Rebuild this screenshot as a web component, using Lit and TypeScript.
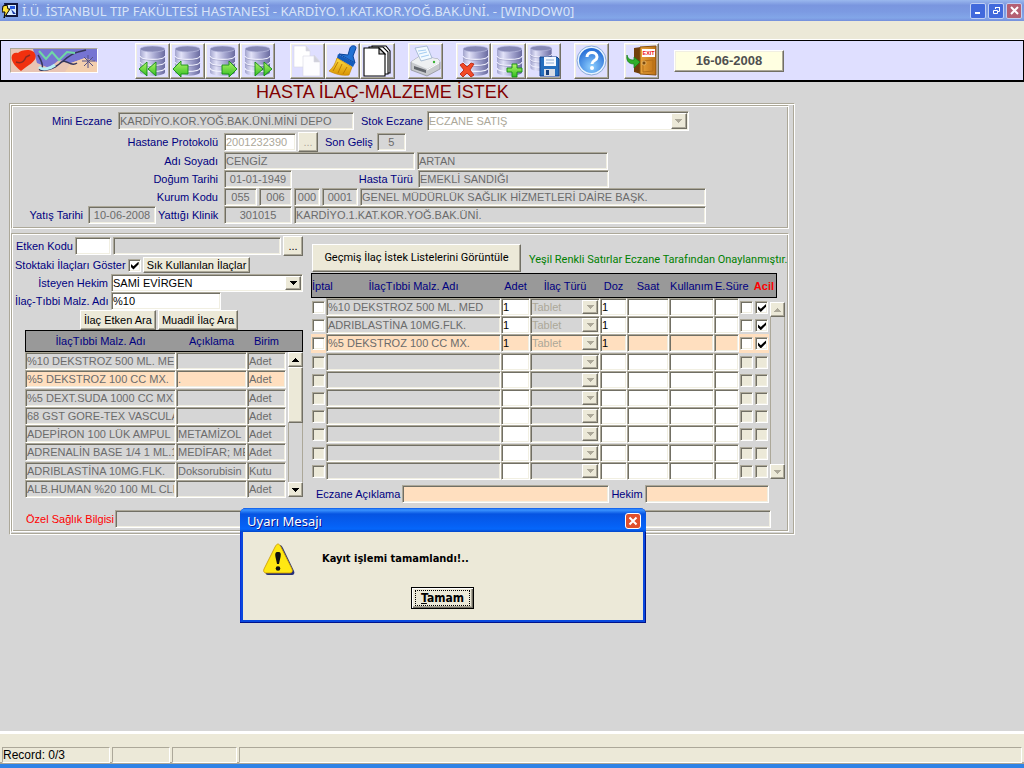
import { LitElement, html, css, svg, nothing } from "lit";
import { customElement, state } from "lit/decorators.js";
import { classMap } from "lit/directives/class-map.js";

interface Drug { name: string; note: string; unit: string; }
interface Order { name: string; qty: string; kind: string; dose: string; urgent: boolean; }

const DRUGS: Drug[] = [
  { name: "%10 DEKSTROZ 500 ML. MED", note: "", unit: "Adet" },
  { name: "%5 DEKSTROZ 100 CC MX.", note: ".", unit: "Adet" },
  { name: "%5 DEXT.SUDA 1000 CC MX.", note: "", unit: "Adet" },
  { name: "68 GST GORE-TEX VASCULAR", note: "", unit: "Adet" },
  { name: "ADEPİRON 100 LÜK AMPUL", note: "METAMİZOL", unit: "Adet" },
  { name: "ADRENALİN BASE 1/4 1 ML.10", note: "MEDİFAR; MED", unit: "Adet" },
  { name: "ADRIBLASTİNA 10MG.FLK.", note: "Doksorubisin HCl", unit: "Kutu" },
  { name: "ALB.HUMAN %20 100 ML CLB", note: "", unit: "Adet" },
];

const ORDERS: (Order | null)[] = [
  { name: "%10 DEKSTROZ 500 ML. MED", qty: "1", kind: "Tablet", dose: "1", urgent: true },
  { name: "ADRIBLASTİNA 10MG.FLK.", qty: "1", kind: "Tablet", dose: "1", urgent: true },
  { name: "%5 DEKSTROZ 100 CC MX.", qty: "1", kind: "Tablet", dose: "1", urgent: true },
  null, null, null, null, null, null, null,
];

const arrow = (up = false) => html`<svg viewBox="0 0 7 4" width="7" height="4" aria-hidden="true">
  <path d=${up ? "M3 0h1v1h1v1h1v1h1v1h-7v-1h1v-1h1v-1h1z" : "M0 0h7v1h-1v1h-1v1h-1v1h-1v-1h-1v-1h-1v-1h-1z"} fill="currentColor"/></svg>`;

const db = (x = 0, y = 0, s = 1) => svg`<g transform="translate(${x} ${y}) scale(${s})">
  <path d="M4 5v23c0 5 25 5 25 0v-23z" fill="url(#cyl)"/>
  <ellipse cx="16.500" cy="5" rx="12.500" ry="3" fill="#8688b5" stroke="#b9bbdf" stroke-width=".7"/>
  <path d="M4 12c0 4.500 25 4.500 25 0M4 18c0 4.500 25 4.500 25 0M4 24c0 4.500 25 4.500 25 0" fill="none" stroke="#f3f3ff" stroke-width="1.100"/>
  <path d="M4 13c0 4.500 25 4.500 25 0M4 19c0 4.500 25 4.500 25 0" fill="none" stroke="#6c6da0" stroke-width=".6" opacity=".6"/></g>`;

const defs = svg`<defs>
  <linearGradient id="cyl"><stop offset="0" stop-color="#a2a4cd"/><stop offset=".25" stop-color="#e2e2f8"/><stop offset=".6" stop-color="#a5a6d0"/><stop offset="1" stop-color="#6a6ba0"/></linearGradient>
  <linearGradient id="grn" x2="0" y2="1"><stop offset="0" stop-color="#b6f56c"/><stop offset="1" stop-color="#2fbd20"/></linearGradient>
  <linearGradient id="wood"><stop offset="0" stop-color="#e9a33b"/><stop offset="1" stop-color="#bd7015"/></linearGradient>
  <linearGradient id="gold" x2="0" y2="1"><stop offset="0" stop-color="#ffdf43"/><stop offset="1" stop-color="#d99405"/></linearGradient>
  <radialGradient id="orb" cx=".5" cy=".75" r=".7"><stop offset="0" stop-color="#8fd0ff"/><stop offset="1" stop-color="#276ed6"/></radialGradient>
</defs>`;

const G = (d: string) => svg`<path d=${d} fill="url(#grn)" stroke="#128b12" stroke-width=".9" stroke-linejoin="round"/>`;

const ICONS: Record<string, unknown> = {
  first: svg`${db()}${G("M11 18v14l-8-7zM20 18v14l-8-7z")}`,
  prev: svg`${db()}${G("M10 17v4h7v9h-7v3l-8-8z")}`,
  next: svg`${db()}${G("M23 17v4h-7v9h7v3l8-8z")}`,
  last: svg`${db()}${G("M14 18v14l8-7zM23 18v14l8-7z")}`,
  copy: svg`<g stroke="#d8d8e4" stroke-width=".6"><path d="M3 2h12l4 5v16h-16z" fill="#fff"/><path d="M15 2v5h4z" fill="#d4d4de"/>
    <path d="M12 12h12l5 6v14h-17z" fill="#fdfdff"/><path d="M23 11v7h6z" fill="#d0d0da"/></g>`,
  brush: svg`<path d="M22 11l2-7c1-3 6-3 6 0l-3 8 2 7-16-9z" fill="#2372d4" stroke="#0b459b"/><path d="M12 10l17 9-2 4-16-9z" fill="#145bbb"/>
    <path d="M11 14l15 9-3 8c-7 1-14-1-20-4 4-3 6-7 8-13z" fill="url(#gold)" stroke="#c48604" stroke-width=".7"/>
    <path d="M12 18l-5 9M16 20l-4 9M21 23l-4 7" stroke="#bb7c05" fill="none"/>`,
  pages: svg`<g fill="#fff" stroke="#000" stroke-width="1.100"><path d="M11 2h14l4 5v22h-18z"/><path d="M8 3h14l5 5v22h-19z"/><path d="M3 4h15l6 6v22h-21z"/><path d="M18 4v6h6z" fill="#ccc"/></g>`,
  print: svg`<path d="M2 18l9-6 18 3 2 3v7l-13 7-16-6z" fill="#c7c9cd" stroke="#888b91" stroke-width=".7"/><path d="M2 18l9-6 18 3 2 3-13 7z" fill="#eef0f2"/>
    <path d="M6 4l12-2 5 12-11 3z" fill="#f3faff" stroke="#8fa8c4" stroke-width=".7"/><path d="M9 7l8-1M10 10l8-2M12 13l8-2" stroke="#a5cdf2"/>
    <path d="M5 22l12 4v3l-12-4z" fill="#62666c"/><path d="M18 26l12-7" stroke="#fff"/><circle cx="25" cy="18" r="1.200" fill="#39b332"/>`,
  del: svg`${db(2)}<path d="M3 21l3-2 4 4 4-4 3 1-4 6 4 5-3 2-4-4-4 4-3-3 4-4z" fill="#f24a28" stroke="#b51c08" stroke-width=".8"/>`,
  add: svg`${db(1)}${G("M20 20h5v4h5v4h-5v5h-5v-5h-5v-4h5z")}`,
  save: svg`${db(0, 0, 0.85)}<path d="M13 13h17l2 2v17h-19z" fill="#246ebe" stroke="#123f8b"/><path d="M17 13h12v9h-12z" fill="#f4f8ff"/><path d="M19 16h8M19 19h8" stroke="#8faed6"/><path d="M17 25h11v7h-11z" fill="#d7dce6"/><path d="M19 26h3v5h-3z" fill="#143e7d"/>`,
  help: svg`<circle cx="16.500" cy="16.500" r="14.500" fill="#e8f4ff" stroke="#8cabd7"/><circle cx="16.500" cy="16.500" r="12.500" fill="url(#orb)"/>
    <path d="M12 13c0-6 10-6 10 0 0 4-5 3-5 7" fill="none" stroke="#fff" stroke-width="3"/><circle cx="17" cy="24" r="2" fill="#fff"/>`,
  exit: svg`<path d="M9 4l7-1v27l-7-2z" fill="#713f0c"/><path d="M15 3l16-1v29l-16-1z" fill="url(#wood)" stroke="#85500d"/><path d="M18 17l10-1v11l-10 1z" fill="none" stroke="#b36e19"/>
    <path d="M17 5h13v8h-13z" fill="#fff"/><text x="17.500" y="11" font-size="5.500" font-weight="700" fill="#e11" font-family="Liberation Sans, sans-serif">EXIT</text>
    <circle cx="19" cy="19" r="2" fill="#7c4b10" stroke="#f6c878" stroke-width=".7"/><path d="M2 11c1 4 3 5 7 5v-3l6 5-6 6v-4c-6 0-8-4-7-9z" fill="#2fae2a" stroke="#127a16" stroke-width=".7"/>`,
};

const TOOLS: { id: string; label: string }[][] = [
  [{ id: "first", label: "İlk kayıt" }, { id: "prev", label: "Önceki kayıt" }, { id: "next", label: "Sonraki kayıt" }, { id: "last", label: "Son kayıt" }],
  [{ id: "copy", label: "Kopyala" }, { id: "brush", label: "Temizle" }, { id: "pages", label: "Listele" }],
  [{ id: "print", label: "Yazdır" }],
  [{ id: "del", label: "Sil" }, { id: "add", label: "Ekle" }, { id: "save", label: "Kaydet" }],
  [{ id: "help", label: "Yardım" }],
  [{ id: "exit", label: "Çıkış" }],
];

@customElement("app-root")
export class AppRoot extends LitElement {
  @state() private dialogOpen = true;

  static styles = css`
    :host { display: flex; flex-direction: column; position: relative; min-height: 100vh; background: #d6d6d6; color: #000;
      font: 11px/14px "Liberation Sans", Arial, sans-serif; overflow: hidden; }
    *, *::before { box-sizing: border-box; }
    button, input, select { font: inherit; color: inherit; margin: 0; border-radius: 0; min-width: 0; }
    svg { display: block; flex: none; }

    .titlebar { height: 21px; display: flex; align-items: center; gap: 4px; padding: 0 2px;
      background: linear-gradient(#9ab8ee, #7a96df 25%, #7c9ae2 55%, #82a6e8 85%, #7690dc); color: #d8e4f8;
      font: 13px/16px "Noto Sans", sans-serif; }
    .titlebar h1 { font: inherit; margin: 0; flex: 1; white-space: nowrap; overflow: hidden; }
    .winbtn { width: 16px; height: 16px; padding: 0; border: 1px solid #c0cff4; border-radius: 2px; background: #4169dc; color: #fff; display: grid; place-items: center; }
    .winbtn.close { background: #b46073; }
    .wins { display: flex; gap: 2px; }
    .menubar { height: 19px; background: #ece9d8; border-bottom: 1px solid #fff; }
    .toolbar { display: flex; align-items: center; height: 42px; background: #dfdfff; border: 1px solid #000; border-bottom-width: 2px; padding: 0 9px; gap: 13px; }
    .logo { border: 1px solid; border-color: #aca899 #fff #fff #aca899; margin-right: 24px; }
    .tools { display: flex; }
    .tools:nth-of-type(2), .tools:nth-of-type(6) { margin-left: 2px; }
    .tool { width: 35px; height: 36px; padding: 0; background: #dfdfff; }
    .date { width: 110px; height: 22px; margin-left: 2px; text-align: center; background: #ffffe1; color: #4f4f4f; font-weight: 700; font-size: 13px; padding: 0; }
    .raised { border: 1px solid; border-color: #fff #716f64 #716f64 #fff; box-shadow: inset -1px -1px #aca899, inset 1px 1px #f1efe2; }

    main { flex: 1; }
    .heading { margin: 0; padding-left: 256px; color: #800000; font-size: 18px; line-height: 21px; font-weight: 400; white-space: nowrap; }
    .frame, .group { border: 1px solid; border-color: #aca899 #fff #fff #aca899; box-shadow: inset 1px 1px #fff, inset -1px -1px #aca899; padding: 2px; }
    .frame { max-width: 786px; margin-left: 9px; padding: 1px 5px 2px 1px; display: grid; gap: 4px; }
    .group.patient { padding: 4px 1px; display: grid; }
    .row { display: flex; align-items: center; height: 18px; gap: 2px; }
    .row.tall { height: 21px; }
    label { color: #000080; white-space: nowrap; text-align: right; flex: none; }
    .field { height: 18px; padding: 0 1px; border: 1px solid; border-color: #aca899 #fff #fff #aca899; background: #fff;
      box-shadow: inset 1px 1px #716f64, inset -1px -1px #f1efe2; outline: none; line-height: 16px; width: 100%; display: block; }
    .field:focus-visible { outline: 1px dotted #000; outline-offset: -3px; }
    .ro { background: #d6d6d6; color: #6b6b6b; }
    .peach { background: #ffdfbf; }
    .mid { text-align: center; }
    .pale { color: #aca899; }
    .btn { background: #ece9d8; border: 1px solid; border-color: #fff #716f64 #716f64 #fff; box-shadow: inset -1px -1px #aca899;
      padding: 0 3px; white-space: nowrap; flex: none; }
    .dots { width: 20px; height: 20px; padding: 0; }

    .lab-a { width: 205px; margin-right: 4px; }
    .lab-b { width: 99px; margin-right: 4px; }
    .lab-c { width: 93px; margin-right: 1px; }
    .lab-kind { width: 119px; margin-right: 3px; }
    .lab-admit { width: 70px; margin-right: 3px; }
    .lab-clinic { width: 60px; margin-right: 4px; }
    .w36 { width: 36px; } .w29 { width: 29px; } .w33 { width: 33px; } .w26 { width: 26px; } .w68 { width: 68px; }
    .w72 { width: 72px; } .w110 { width: 110px; } .w191 { width: 191px; } .w207 { width: 207px; } .w236 { width: 236px; } .w346 { width: 346px; } .w412 { width: 412px; } .w124 { width: 124px; }
    .gap5 { margin-left: 5px; margin-right: 2px; }

    .combo { position: relative; display: block; }
    .combo select { appearance: none; padding: 0 18px 0 1px; opacity: 1; }
    .combo .drop { position: absolute; right: 2px; top: 2px; bottom: 2px; width: 16px; display: grid; place-items: center; pointer-events: none; padding: 0; color: #000; }
    .combo select:disabled ~ .drop { color: #aca899; }
    .stock { width: 262px; } .stock select { height: 20px; }

    .box { appearance: none; width: 13px; height: 13px; flex: none; display: grid; place-items: center; border: 1px solid; border-color: #aca899 #fff #fff #aca899;
      background: #fff; box-shadow: inset 1px 1px #716f64, inset -1px -1px #f1efe2; padding: 0; }
    .box:disabled { background: #ece9d8; }
    .box:checked::before { content: ""; width: 8px; height: 8px; margin: 1px 0 0 1px; background: #000; clip-path: polygon(0 28%, 35% 60%, 100% 0, 100% 35%, 35% 100%, 0 65%); }

    .work { padding: 2px 2px 2px 1px; display: grid; }
    .cols { display: grid; grid-template-columns: 290px minmax(0, 1fr); gap: 8px; align-items: start; }
    .left .row { padding-left: 2px; }
    .left .first { height: 20px; padding-left: 3px; }
    .left .pair { height: 20px; padding-left: 67px; }
    .left .pair .btn { height: 20px; }
    .right { padding-top: 7px; min-width: 0; }
    .banner { display: flex; align-items: center; gap: 8px; height: 30px; }
    .banner .btn { width: 209px; height: 28px; margin-left: 1px; }
    .banner p { margin: 4px 0 0; color: #008000; white-space: nowrap; }
    .banner .btn, .banner p { font-family: Roboto, "Liberation Sans", sans-serif; }

    table { border-collapse: separate; border-spacing: 0; table-layout: fixed; }
    th, td { padding: 0; }
    th { background: #999; color: #000080; font-weight: 400; white-space: nowrap; }
    thead tr { outline: 1px solid #000; outline-offset: -1px; }
    td { height: 18px; vertical-align: top; }
    .drugs { width: 278px; height: 168px; margin-left: 12px; }
    .drugs thead tr { height: 22px; }
    .orders { width: 466px; height: 207px; }
    .orders thead tr { height: 25px; }
    .orders .box { margin: 3px 0 0 1px; }
    th.urgent { color: #f00; font-weight: 700; text-align: right; padding-right: 3px; }
    th.start { text-align: left; padding-left: 1px; }
    .sel .paint { background: #ffdfbf; }
    .bar { display: flex; flex-direction: column; width: 15px; border: solid #aca899; border-width: 0 1px; background: #d6d6d6; margin-left: 2px; }
    .bar .btn { width: 15px; height: 15px; margin-left: -1px; padding: 0; display: grid; place-items: center; }
    .bar .thumb { height: 56px; }
    .bar .run { flex: 1; }
    .drugs .bar { height: 145px; }
    .orders .bar { height: 177px; margin: 4px 0 0 1px; color: #aca899; }
    .notes { margin: 5px 0 0 5px; }
    .grow { flex: 1; width: auto; }
    .special { padding: 0 15px 0 13px; margin-top: 7px; margin-bottom: 1px; }
    .special label { color: #f00; width: 87px; text-align: left; }

    .status { height: 37px; background: #ece9d8; border-top: 3px solid #fff; border-bottom: 4px solid #2f83e6; box-shadow: inset 0 -2px #aca899; display: grid;
      grid-template-columns: 108px 58px 65px 1fr; gap: 2px; padding: 13px 2px 2px; }
    .status span { border: 1px solid; border-color: #aca899 #fff #fff #aca899; line-height: 14px; white-space: nowrap; font-size: 12px; }

    .dialog { position: absolute; left: 240px; top: 508px; width: 406px; margin: 0; padding: 0 3px 3px; border: 0; color: #000;
      background: #0a48dd; border-radius: 6px 6px 0 0; box-shadow: inset -1px -1px #00138c, inset 1px 0 #0831d9; }
    .dialog header { display: flex; align-items: center; justify-content: space-between; height: 24px; padding: 2px 5px 0 7px; margin: 0 -3px;
      background: linear-gradient(#0a58e8, #3b94ff 8%, #0654e2 25%, #0560f4 70%, #0567fb 88%, #0345c7); color: #fff; border-radius: 6px 6px 0 0;
      font: 13px/16px "Noto Sans", sans-serif; text-shadow: 1px 1px #0f1089; }
    .dialog .x { width: 16px; height: 16px; padding: 0; display: grid; place-items: center; border: 1px solid #fff; border-radius: 3px; background: #e0502c; }
    .dialog section { background: #ece9d8; height: 88px; padding: 10px 20px 0 19px; font: 700 11px/14px "DejaVu Sans Condensed", "DejaVu Sans", sans-serif; }
    .msg { display: flex; align-items: center; gap: 26px; height: 34px; }
    .msg p { margin: 0; }
    .ok { display: block; margin: 11px auto 0; width: 63px; height: 22px; padding: 0; background: #ece9d8; border: 1px solid #000; box-shadow: inset 1px 1px #fff, inset -1px -1px #716f64, inset -2px -2px #aca899; font-size: 12px; }
    .ok span { display: block; margin: 0 3px; line-height: 14px; border: 1px dotted #000; }
  `;

  private ro(value: string, label: string, cls = "", id = "") {
    return html`<input class="field ro ${cls}" id=${id || nothing} aria-label=${id ? nothing : label} readonly .value=${value}>`;
  }

  private combo(id: string, value: string, disabled: boolean, cls: string, fieldCls = "", label = "") {
    return html`<span class="combo ${cls}"><select class="field ${fieldCls}" id=${id || nothing} aria-label=${label || nothing} ?disabled=${disabled}><option>${value}</option></select><span class="btn drop">${arrow()}</span></span>`;
  }

  private close = () => { this.dialogOpen = false; };

  private renderPatient() {
    return html`<section class="group patient">
      <div class="row tall"><label class="lab-b" for="depot">Mini Eczane</label>${this.ro("KARDİYO.KOR.YOĞ.BAK.ÜNİ.MİNİ DEPO", "", "w236", "depot")}
        <label class="gap5" for="stock">Stok Eczane</label>${this.combo("stock", "ECZANE SATIŞ", true, "stock", "pale")}</div>
      <div class="row tall"><label class="lab-a" for="protocol">Hastane Protokolü</label><input id="protocol" class="field w72 pale" .value=${"2001232390"}>
        <button class="btn dots pale" aria-label="Protokol seç">...</button><label class="gap5" for="visit">Son Geliş</label>${this.ro("5", "", "w29 mid", "visit")}</div>
      <div class="row"><label class="lab-a" for="name">Adı Soyadı</label>${this.ro("CENGİZ", "", "w191", "name")}${this.ro("ARTAN", "Soyadı", "w191")}</div>
      <div class="row"><label class="lab-a" for="birth">Doğum Tarihi</label>${this.ro("01-01-1949", "", "w68 mid", "birth")}
        <label class="lab-kind" for="kind">Hasta Türü</label>${this.ro("EMEKLİ SANDIĞI", "", "w191", "kind")}</div>
      <div class="row"><label class="lab-a" for="inst">Kurum Kodu</label>${this.ro("055", "", "w33 mid", "inst")}${this.ro("006", "Kurum kodu 2", "w33 mid")}${this.ro("000", "Kurum kodu 3", "w26 mid")}${this.ro("0001", "Kurum kodu 4", "w36 mid")}${this.ro("GENEL MÜDÜRLÜK SAĞLIK HİZMETLERİ DAİRE BAŞK.", "Kurum adı", "w346")}</div>
      <div class="row"><label class="lab-admit" for="admit">Yatış Tarihi</label>${this.ro("10-06-2008", "", "w68 mid", "admit")}
        <label class="lab-clinic" for="clinic">Yattığı Klinik</label>${this.ro("301015", "", "w68 mid", "clinic")}${this.ro("KARDİYO.1.KAT.KOR.YOĞ.BAK.ÜNİ.", "Klinik adı", "w412")}</div>
    </section>`;
  }

  private renderDrugs() {
    return html`<table class="drugs">
      <colgroup><col width="151"><col width="71"><col width="39"><col width="17"></colgroup>
      <thead><tr><th>İlaçTıbbi Malz. Adı</th><th>Açıklama</th><th>Birim</th><th></th></tr></thead>
      <tbody>${DRUGS.map((d, i) => {
        const c = i === 1 ? "peach" : "";
        return html`<tr><td>${this.ro(d.name, "Malzeme", c)}</td><td>${this.ro(d.note, "Açıklama", c)}</td><td>${this.ro(d.unit, "Birim", c)}</td>
          ${i === 0 ? html`<td rowspan="8"><div class="bar"><button class="btn" aria-label="Yukarı">${arrow(true)}</button><div class="btn thumb"></div><div class="run"></div><button class="btn" aria-label="Aşağı">${arrow()}</button></div></td>` : nothing}</tr>`;
      })}</tbody></table>`;
  }

  private renderOrders() {
    return html`<table class="orders">
      <colgroup><col width="15"><col width="175"><col width="29"><col width="70"><col width="27"><col width="42"><col width="45"><col width="25"><col width="15"><col width="15"><col width="8"></colgroup>
      <thead><tr><th class="start">İptal</th><th>İlaçTıbbi Malz. Adı</th><th>Adet</th><th>İlaç Türü</th><th>Doz</th><th>Saat</th><th>Kullanım</th><th class="start">E.Süre</th><th class="urgent" colspan="3">Acil</th></tr></thead>
      <tbody>${ORDERS.map((o, i) => {
        const sel = i === 2, c = sel ? "peach" : "";
        const cell = (v: string, label: string) => html`<td><input class="field ${c}" aria-label=${label} .value=${v}></td>`;
        return html`<tr class=${classMap({ sel })}>
          <td class="paint"><input type="checkbox" class="box" aria-label="İptal" ?disabled=${!o}></td>
          <td>${this.ro(o?.name ?? "", "Malzeme", c)}</td>${cell(o?.qty ?? "", "Adet")}
          <td>${this.combo("", o?.kind ?? "", true, "", `ro pale ${c}`, "İlaç türü")}</td>
          ${cell(o?.dose ?? "", "Doz")}${cell("", "Saat")}${cell("", "Kullanım")}${cell("", "E.Süre")}
          <td class="paint"><input type="checkbox" class="box" aria-label="Onay" ?disabled=${!o}></td>
          <td class="paint"><input type="checkbox" class="box" aria-label="Acil" ?disabled=${!o} ?checked=${!!o?.urgent}></td>
          ${i === 0 ? html`<td rowspan="10"><div class="bar"><button class="btn" aria-label="Yukarı">${arrow(true)}</button><div class="run"></div><button class="btn" aria-label="Aşağı">${arrow()}</button></div></td>` : nothing}</tr>`;
      })}</tbody></table>`;
  }

  render() {
    return html`
      <svg width="0" height="0" aria-hidden="true">${defs}</svg>
      <div class="titlebar">
        <svg viewBox="0 0 16 16" width="16" height="16"><path d="M2 0h14v14h-12z" fill="#10163c"/><path d="M5 2h9v10h-9z" fill="#d7ecff"/><path d="M8 3h5v3h-5z" fill="#255ae0"/><path d="M9 6l5 5h-3z" fill="#1737a8"/><path d="M1 3l4-1 1 4h2l-6 9 1-6h-3z" fill="#ffe33b" stroke="#000" stroke-width="1"/></svg>
        <h1>İ.Ü. İSTANBUL TIP FAKÜLTESİ HASTANESİ - KARDİYO.1.KAT.KOR.YOĞ.BAK.ÜNİ. - [WINDOW0]</h1>
        <div class="wins">
          <button class="winbtn" aria-label="Küçült"><svg width="9" height="9"><path d="M1 6h5v2h-5z" fill="#fff"/></svg></button>
          <button class="winbtn" aria-label="Geri yükle"><svg width="9" height="9" fill="none" stroke="#fff"><path d="M3.500 3v-1.500h4v4h-1.500M3 1.500h5M1.500 4.500h4v3h-4z"/></svg></button>
          <button class="winbtn close" aria-label="Pencereyi kapat"><svg width="9" height="9"><path d="M1 1l7 7M8 1l-7 7" stroke="#fff" stroke-width="2"/></svg></button>
        </div>
      </div>
      <div class="menubar"></div>
      <nav class="toolbar" aria-label="Araçlar">
        <svg class="logo" viewBox="0 0 86 23" width="88" height="25" preserveAspectRatio="none"><rect width="86" height="23" fill="#e9c5b4"/><path d="M22 0h64v13l-12-4-14 5-12-3-10 8-12-5z" fill="#7674d2"/><path d="M60 14l14-5 12 5v9h-32z" fill="#f3cfae"/>
          <path d="M10 22c-15-12-9-20-3-18 3-3 15-5 17 1 3 7-6 10-14 17z" fill="#f1300e"/><path d="M5 13c5 2 8 0 10-5l4-2" fill="none" stroke="#8c2b22" stroke-width="1.500"/>
          <path d="M27 6c5 8 6 15 2 14-3 2 9 2 15-2 8-5 14-13 23-15l8-2M49 14c6-6 10 5 17 0" fill="none" stroke="#35365c" stroke-width="1.500"/>
          <path d="M28 18c4 4 12 1 16-2" fill="none" stroke="#b7f0f5" stroke-width="3"/><path d="M28 2l7 8 6-7 7 8 8-8 8 1" fill="none" stroke="#6fd8a5" stroke-width="2"/><path d="M77 6v13M71 12h13M73 8l9 9M82 8l-9 9" stroke="#565386"/></svg>
        ${TOOLS.map(g => html`<div class="tools">${g.map(t => html`<button class="tool raised" aria-label=${t.label}><svg viewBox="0 0 33 34" width="33" height="34">${ICONS[t.id]}</svg></button>`)}</div>`)}
        <input class="date raised" aria-label="Tarih" readonly .value=${"16-06-2008"}>
      </nav>
      <main>
        <h2 class="heading">HASTA İLAÇ-MALZEME İSTEK</h2>
        <div class="frame">
          ${this.renderPatient()}
          <section class="group work">
            <div class="cols">
              <div class="left">
                <div class="row first"><label for="agent">Etken Kodu</label><input id="agent" class="field w36">${this.ro("", "Etken adı", "grow")}<button class="btn dots" aria-label="Etken seç">...</button></div>
                <div class="row"><label for="instock">Stoktaki İlaçları Göster</label><input type="checkbox" id="instock" class="box" checked><button class="btn">Sık Kullanılan İlaçlar</button></div>
                <div class="row"><label class="lab-c" for="doctor">İsteyen Hekim</label>${this.combo("doctor", "SAMİ EVİRGEN", false, "grow")}</div>
                <div class="row"><label class="lab-c" for="item">İlaç-Tıbbi Malz. Adı</label><input id="item" class="field w110" .value=${"%10"}></div>
                <div class="row pair"><button class="btn">İlaç Etken Ara</button><button class="btn">Muadil İlaç Ara</button></div>
                ${this.renderDrugs()}
              </div>
              <div class="right">
                <div class="banner"><button class="btn">Geçmiş İlaç İstek Listelerini Görüntüle</button><p>Yeşil Renkli Satırlar Eczane Tarafından Onaylanmıştır.</p></div>
                ${this.renderOrders()}
                <div class="row notes"><label for="note">Eczane Açıklama</label><input id="note" class="field peach w207"><label for="md">Hekim</label><input id="md" class="field peach w124"></div>
              </div>
            </div>
            <div class="row special"><label for="health">Özel Sağlık Bilgisi</label>${this.ro("", "", "grow", "health")}</div>
          </section>
        </div>
      </main>
      <footer class="status"><span>Record: 0/3</span><span></span><span></span><span></span></footer>
      ${this.dialogOpen ? html`<div class="dialog" role="alertdialog" aria-label="Uyarı Mesajı">
        <header><span>Uyarı Mesajı</span><button class="x" aria-label="Kapat" @click=${this.close}><svg width="10" height="10"><path d="M1.500 1.500l7 7M8.500 1.500l-7 7" stroke="#fff" stroke-width="2"/></svg></button></header>
        <section><div class="msg"><svg viewBox="0 0 32 32" width="34" height="32"><path d="M17 2c1 0 2 1 3 3l11 23c1 2 0 4-2 4h-24c-2 0-3-2-2-3l11-24c1-2 2-3 3-3z" fill="#26307a"/><path d="M15 1c1 0 2 1 3 3l11 22c1 2 0 4-2 4h-24c-2 0-3-2-2-4l11-22c1-2 2-3 3-3z" fill="#ffe813" stroke="#c99500" stroke-width=".8"/><path d="M15 9c3 0 3 2 2.500 5l-1.500 7h-2l-1.500-7c-.5-3-.5-5 2.500-5z" fill="#111"/><circle cx="15" cy="25.500" r="2.300" fill="#111"/></svg>
          <p>Kayıt işlemi tamamlandı!..</p></div>
          <button class="ok" @click=${this.close}><span><u>T</u>amam</span></button></section>
      </div>` : nothing}
    `;
  }
}
